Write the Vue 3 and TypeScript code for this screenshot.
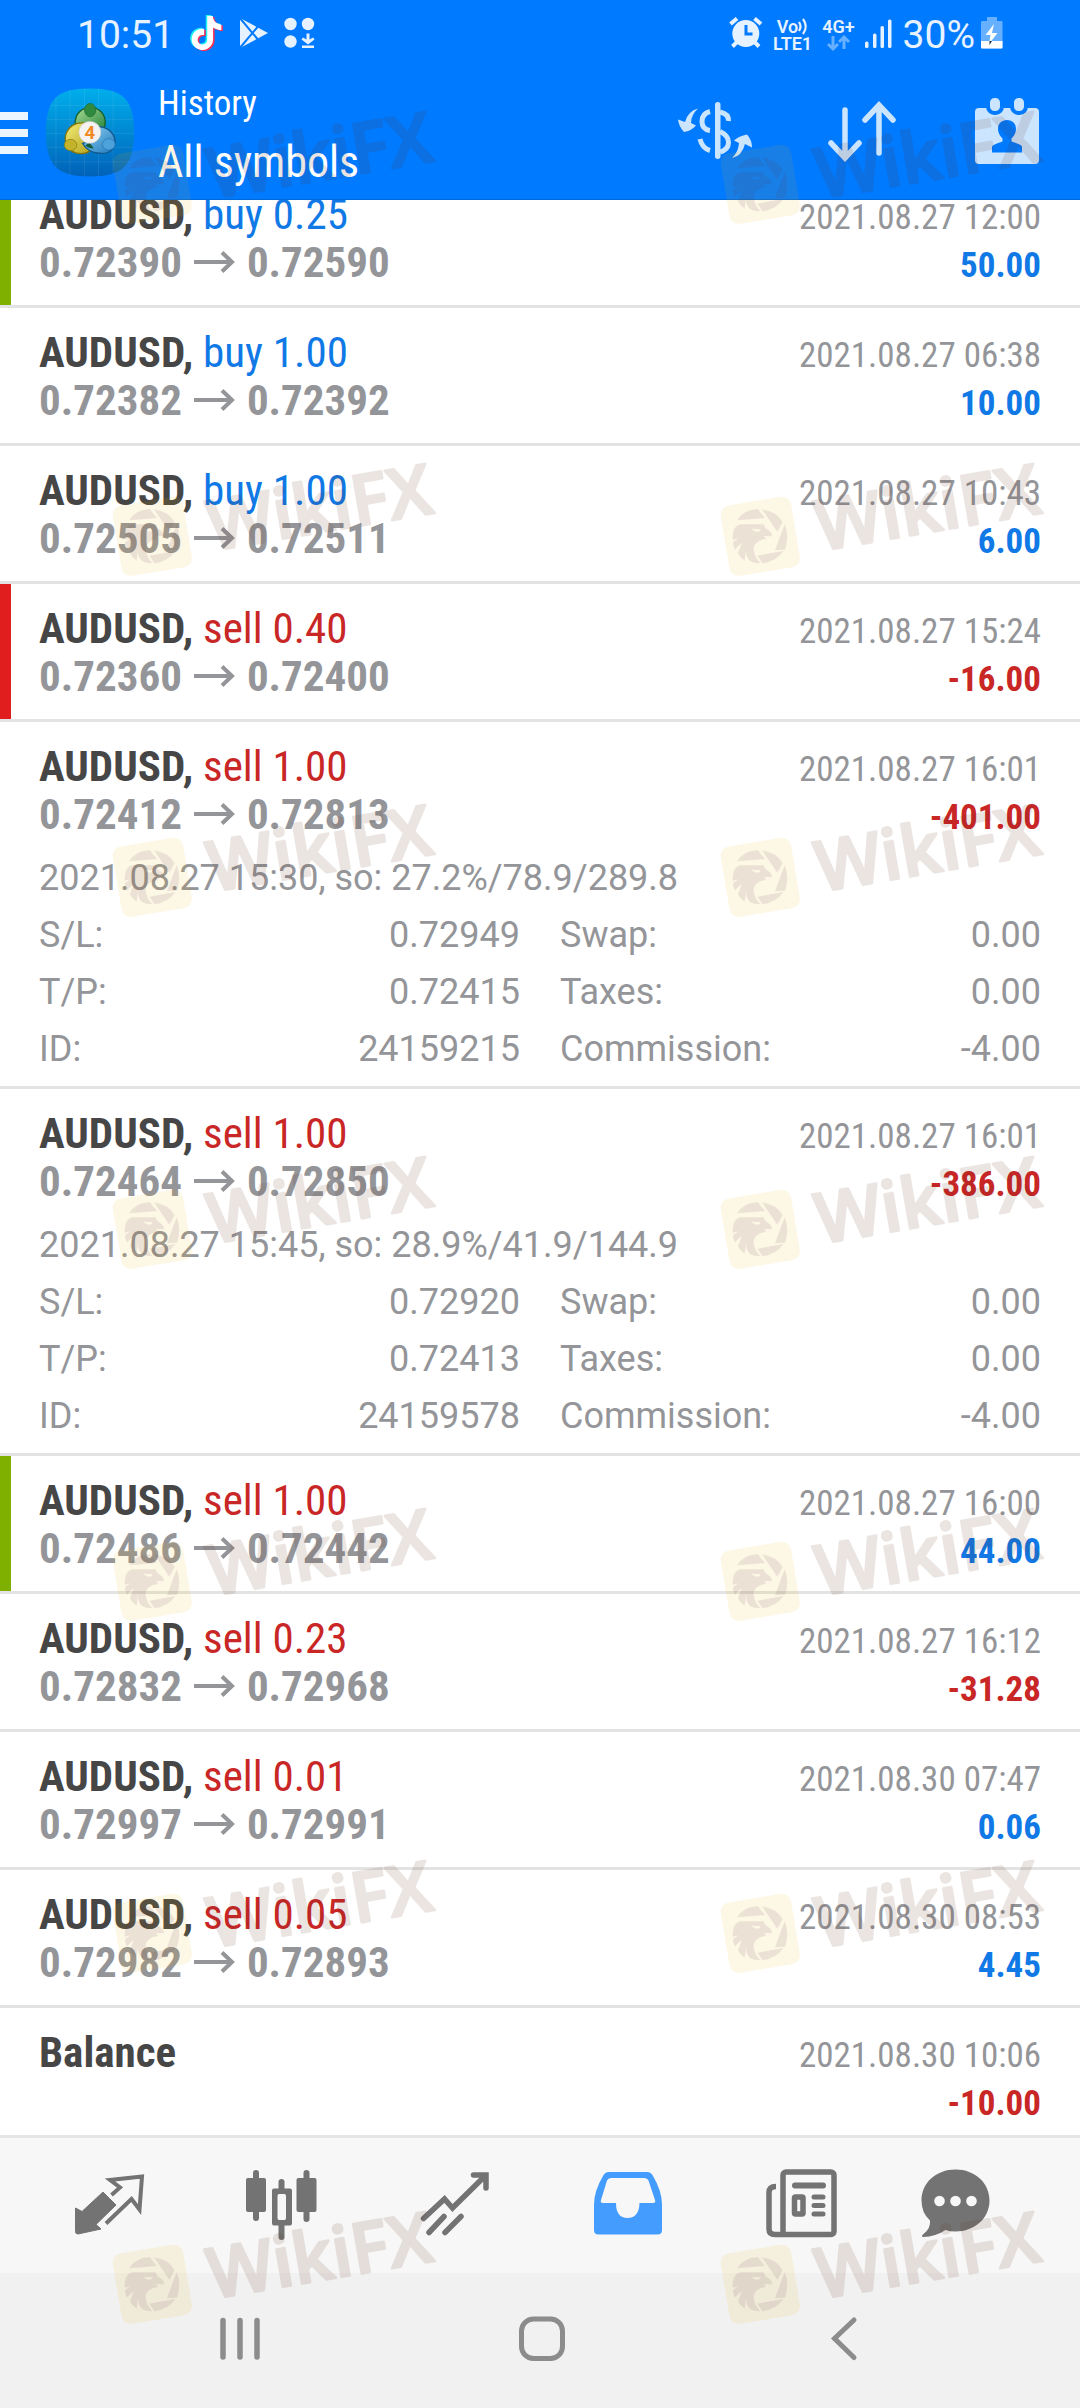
<script setup lang="ts">
import { onMounted, ref } from 'vue'

type Side = 'buy' | 'sell'

interface Detail {
  note: string
  fields: [string, string][]
}

interface Deal {
  title: string
  side?: Side
  volume?: string
  from?: string
  to?: string
  time: string
  profit: string
  mark?: 'take' | 'stop'
  detail?: Detail
}

const deals: Deal[] = [
  { title: 'AUDUSD', side: 'buy', volume: '0.25', from: '0.72390', to: '0.72590', time: '2021.08.27 12:00', profit: '50.00', mark: 'take' },
  { title: 'AUDUSD', side: 'buy', volume: '1.00', from: '0.72382', to: '0.72392', time: '2021.08.27 06:38', profit: '10.00' },
  { title: 'AUDUSD', side: 'buy', volume: '1.00', from: '0.72505', to: '0.72511', time: '2021.08.27 10:43', profit: '6.00' },
  { title: 'AUDUSD', side: 'sell', volume: '0.40', from: '0.72360', to: '0.72400', time: '2021.08.27 15:24', profit: '-16.00', mark: 'stop' },
  {
    title: 'AUDUSD', side: 'sell', volume: '1.00', from: '0.72412', to: '0.72813', time: '2021.08.27 16:01', profit: '-401.00',
    detail: {
      note: '2021.08.27 15:30, so: 27.2%/78.9/289.8',
      fields: [['S/L:', '0.72949'], ['Swap:', '0.00'], ['T/P:', '0.72415'], ['Taxes:', '0.00'], ['ID:', '24159215'], ['Commission:', '-4.00']],
    },
  },
  {
    title: 'AUDUSD', side: 'sell', volume: '1.00', from: '0.72464', to: '0.72850', time: '2021.08.27 16:01', profit: '-386.00',
    detail: {
      note: '2021.08.27 15:45, so: 28.9%/41.9/144.9',
      fields: [['S/L:', '0.72920'], ['Swap:', '0.00'], ['T/P:', '0.72413'], ['Taxes:', '0.00'], ['ID:', '24159578'], ['Commission:', '-4.00']],
    },
  },
  { title: 'AUDUSD', side: 'sell', volume: '1.00', from: '0.72486', to: '0.72442', time: '2021.08.27 16:00', profit: '44.00', mark: 'take' },
  { title: 'AUDUSD', side: 'sell', volume: '0.23', from: '0.72832', to: '0.72968', time: '2021.08.27 16:12', profit: '-31.28' },
  { title: 'AUDUSD', side: 'sell', volume: '0.01', from: '0.72997', to: '0.72991', time: '2021.08.30 07:47', profit: '0.06' },
  { title: 'AUDUSD', side: 'sell', volume: '0.05', from: '0.72982', to: '0.72893', time: '2021.08.30 08:53', profit: '4.45' },
  { title: 'Balance', time: '2021.08.30 10:06', profit: '-10.00' },
]

const watermarkRows = [127, 479, 820, 1172, 1524, 1876, 2227]

const list = ref<HTMLElement | null>(null)

// The list opens scrolled a little, with its first deal partly under the header.
onMounted(() => {
  if (list.value) list.value.scrollTop = 30
})
</script>

<template>
  <div class="screen">
    <header class="top">
      <div class="status">
        <div class="status-left">
          <span class="clock">10:51</span>
          <svg class="ic-tiktok" width="34" height="40" viewBox="0 0 34 40" aria-hidden="true">
            <defs>
              <path id="note" d="M12.525.02c1.31-.02 2.61-.01 3.91-.02.08 1.53.63 3.09 1.75 4.17 1.12 1.11 2.7 1.62 4.24 1.79v4.03c-1.44-.05-2.89-.35-4.2-.97-.57-.26-1.1-.59-1.62-.93-.01 2.92.01 5.84-.02 8.75-.08 1.4-.54 2.79-1.35 3.94-1.31 1.92-3.58 3.17-5.91 3.21-1.43.08-2.86-.31-4.08-1.03-2.02-1.19-3.44-3.37-3.65-5.71-.02-.5-.03-1-.01-1.49.18-1.9 1.12-3.72 2.58-4.96 1.66-1.44 3.98-2.13 6.15-1.72.02 1.48-.04 2.96-.04 4.44-.99-.32-2.15-.23-3.02.37-.63.41-1.11 1.04-1.36 1.75-.21.51-.15 1.07-.14 1.61.24 1.64 1.82 3.02 3.5 2.87 1.12-.01 2.19-.66 2.77-1.61.19-.33.4-.67.41-1.06.1-1.79.06-3.57.07-5.36.01-4.03-.01-8.05.02-12.07z" />
            </defs>
            <use href="#note" fill="#25f4ee" transform="translate(-2 0) scale(1.42)" />
            <use href="#note" fill="#fe2c55" transform="translate(1 2) scale(1.42)" />
            <use href="#note" fill="#fff" transform="translate(-.5 1) scale(1.42)" />
          </svg>
          <svg width="28" height="40" viewBox="0 0 28 40" aria-hidden="true">
            <path d="M0 3 28 18 0 33Z" fill="#e6f2ff" />
            <path d="M-1 2 20 27M-1 34 20 9" stroke="#007aff" stroke-width="2" />
          </svg>
          <svg width="30" height="40" viewBox="0 0 30 40" fill="#e6f2ff" aria-hidden="true">
            <circle cx="6.500" cy="9" r="6.200" />
            <circle cx="24" cy="9" r="6.200" />
            <circle cx="6.500" cy="26.500" r="6.200" />
            <path d="M22.500 18.500h3v6l3.500-2 1.500 2-6.500 5-6.500-5 1.500-2 3.500 2zM18 30.500h12v2.500H18z" />
          </svg>
        </div>
        <div class="status-right">
          <svg width="34" height="40" viewBox="0 0 34 40" aria-hidden="true">
            <g fill="none" stroke="#e6f2ff" stroke-width="4">
              <path d="M1.500 9 8 3.500M32 9l-6.500-5.500M8 27l-4.500 4.500M25.500 27l4.500 4.500" />
            </g>
            <circle cx="16.800" cy="18.500" r="13.500" fill="#e6f2ff" />
            <path d="M17 10v9h6.500" fill="none" stroke="#007aff" stroke-width="3" />
          </svg>
          <div class="net">
            <span>Vo<svg width="10" height="17" viewBox="0 0 10 17" fill="none" stroke="#e6f2ff" stroke-width="2.200" aria-hidden="true"><path d="M1 4q3 4.500 0 9M5 1q5.500 7.500 0 15" /></svg></span>
            <span>LTE1</span>
          </div>
          <div class="net">
            <span>4G+</span>
            <svg width="24" height="17" viewBox="0 0 24 17" fill="none" stroke="#66b0ff" stroke-width="3" aria-hidden="true">
              <path d="M7 1v12M2 9l5 5 5-5M18 14V2M13 7l5-5 5 5" />
            </svg>
          </div>
          <svg width="28" height="40" viewBox="0 0 28 40" fill="#e6f2ff" aria-hidden="true">
            <rect x="0" y="26.500" width="3.500" height="6.500" rx="1.500" />
            <rect x="8" y="18.500" width="3.500" height="14.500" rx="1.500" />
            <rect x="15.500" y="11" width="3.500" height="22" rx="1.500" />
            <rect x="23" y="4.500" width="3.500" height="28.500" rx="1.500" />
          </svg>
          <span class="battery">30%</span>
          <svg width="22" height="40" viewBox="0 0 22 40" aria-hidden="true">
            <path d="M6 2h10v4h4.500q1 0 1 1v26.500H0V7q0-1 1-1h5z" fill="#66b0ff" />
            <path d="M0 26h21.500v6q0 1.500-1.500 1.500H1.500Q0 33.500 0 32z" fill="#fff" />
            <path d="m13 9-8.500 11h5L8 29l8.500-11h-5.500z" fill="#fff" />
            <path d="M8.500 26h2.500l-2.500 4z" fill="#12304f" />
          </svg>
        </div>
      </div>

      <div class="bar">
        <button class="menu" type="button" aria-label="Menu"><i></i><i></i><i></i></button>
        <svg class="logo" width="88" height="89" viewBox="48 25 265 265" aria-hidden="true">
          <defs>
            <linearGradient id="sky" x1="0" y1="0" x2="0" y2="1">
              <stop offset="0" stop-color="#00aeec" />
              <stop offset="1" stop-color="#0062b8" />
            </linearGradient>
            <linearGradient id="gr" x1="0" y1="0" x2="1" y2="1"><stop offset="0" stop-color="#a8dd94" /><stop offset="1" stop-color="#23803a" /></linearGradient>
            <linearGradient id="ye" x1="0" y1="0" x2="1" y2="1"><stop offset="0" stop-color="#f3ee7c" /><stop offset="1" stop-color="#b3a015" /></linearGradient>
            <linearGradient id="bl" x1="0" y1="0" x2="1" y2="1"><stop offset="0" stop-color="#8fd3f2" /><stop offset="1" stop-color="#1f78bd" /></linearGradient>
          </defs>
          <path d="M180 25C280 25 313 57 313 157S280 290 180 290 48 257 48 157 80 25 180 25Z" fill="url(#sky)" />
          <path d="M78 50v215M120 28v260M164 25v265M206 25v265M250 30v255M62 76h238M50 118h262M48 160h265M50 202h262M60 246h242" stroke="#fff" stroke-opacity=".13" stroke-width="2" />
          <path d="M136 132C134 100 158 82 182 82s48 20 44 52q-4 16-14 22l-62-20Z" fill="url(#gr)" stroke="#185f2c" stroke-width="4" />
          <path d="M190 205q-20 22-52 14c-26-8-36-36-30-56 8-24 30-38 58-34Z" fill="url(#ye)" stroke="#857508" stroke-width="4" />
          <path d="M208 140c28 2 48 22 48 46-3 28-24 36-48 34-24-2-40-12-50-30l36-10Z" fill="url(#bl)" stroke="#12588f" stroke-width="4" />
          <path d="m166 196 14-8 12 18q-16 0-26-10Z" fill="#145c3c" />
          <ellipse cx="181" cy="90" rx="17" ry="20" fill="#2f8a3f" stroke="#1d6b2e" stroke-width="2" />
          <ellipse cx="122" cy="195" rx="19" ry="17" fill="#c2b32a" stroke="#8a7a0c" stroke-width="2" />
          <ellipse cx="237" cy="193" rx="19" ry="17" fill="#4ea2dc" stroke="#2273b5" stroke-width="2" />
          <circle cx="180" cy="157" r="33" fill="#f4f3f1" stroke="#ccc" stroke-width="2" />
          <text x="180" y="177" class="four">4</text>
        </svg>
        <h1 class="titles"><small>History</small><span>All symbols</span></h1>
        <div class="actions">
          <button type="button" aria-label="Symbols">
            <svg width="74" height="68" viewBox="0 0 74 68" aria-hidden="true">
              <g fill="#cce5ff">
                <path d="M20 9.500Q13 16 13 24l5 2.500q-5 5.500-12 6.500Q1 28 0 20.500l7 2.500Q10 12 20 9.500Z" />
                <path d="M54 59q6.500-6 7-15l-5-2.500Q61 37 69 35.500q5 5.500 5 13L67 45Q64 57 54 59Z" />
                <rect x="37" y="3" width="5.500" height="57" rx="2.700" />
              </g>
              <g fill="none" stroke="#cce5ff" stroke-width="5">
                <path d="M32 12.500q-8 2-8 10t8 9M22 40q2 9 10 11.500M42 13q9 2 8.500 9M42 32.500q8.500 4 8.500 11T42 53" />
              </g>
            </svg>
          </button>
          <button type="button" aria-label="Sort">
            <svg width="74" height="68" viewBox="0 0 74 68" fill="none" stroke="#cce5ff" stroke-width="5.500" stroke-linecap="round" aria-hidden="true">
              <path d="M19 11v48M5 44l14 15 14-15M53 54V6M39 21 53 6l14 15" />
            </svg>
          </button>
          <button type="button" aria-label="Period">
            <svg width="74" height="68" viewBox="0 0 74 68" aria-hidden="true">
              <rect x="1" y="9" width="64" height="56" rx="4" fill="#cce5ff" />
              <g fill="#cce5ff" stroke="#007aff" stroke-width="4">
                <rect x="14" y="-3" width="14" height="17" rx="6.500" />
                <rect x="38" y="-3" width="14" height="17" rx="6.500" />
              </g>
              <path d="M33 21c5.500 0 9 3.500 9 9 0 4-2 7-4.500 9.500v3q9.500 3 10.500 5v6H18v-6q1-2 10.500-5v-3C26 37 24 34 24 30c0-5.500 3.500-9 9-9Z" fill="#007aff" />
            </svg>
          </button>
        </div>
      </div>
    </header>

    <ul ref="list" class="deals">
      <li v-for="(deal, i) in deals" :key="i" class="deal" :class="deal.mark">
        <div class="line">
          <div class="name"><b>{{ deal.title }}{{ deal.side ? ', ' : '' }}</b><span v-if="deal.side" :class="deal.side">{{ deal.side }} {{ deal.volume }}</span></div>
          <time class="time">{{ deal.time }}</time>
        </div>
        <div class="line">
          <div class="prices">
            <template v-if="deal.from">
              <span>{{ deal.from }}</span>
              <svg width="41" height="22" viewBox="0 0 41 22" fill="none" stroke="#949599" stroke-width="4" role="img" aria-label="to">
                <path d="M0 11h38M28 1.500 38 11 28 20.500" />
              </svg>
              <span>{{ deal.to }}</span>
            </template>
            <template v-else>&nbsp;</template>
          </div>
          <b class="profit" :class="deal.profit.startsWith('-') ? 'sell' : 'buy'">{{ deal.profit }}</b>
        </div>
        <div v-if="deal.detail" class="detail">
          <p>{{ deal.detail.note }}</p>
          <dl>
            <div v-for="[label, value] in deal.detail.fields" :key="label">
              <dt>{{ label }}</dt>
              <dd>{{ value }}</dd>
            </div>
          </dl>
        </div>
      </li>
    </ul>

    <nav class="tabs">
      <button type="button" aria-label="Quotes">
        <svg width="72" height="72" viewBox="0 0 72 72" aria-hidden="true">
          <path d="M2.500 38 9 41.500 30 22l13 13-20 19.500 5 4.500-23 5q-2.500 0-2.500-2.500z" fill="#737373" stroke="#737373" stroke-linejoin="round" />
          <path d="M38.500 25 47 17.500 37 10l32-3.500-2.500 33-8-10.500L33 53.500" fill="none" stroke="#737373" stroke-width="4" />
        </svg>
      </button>
      <button type="button" aria-label="Charts">
        <svg width="72" height="72" viewBox="0 0 72 72" fill="#737373" aria-hidden="true">
          <rect x="7" y="0" width="6" height="51" rx="3" /><rect x="0" y="8" width="20" height="34" rx="2" />
          <rect x="57.500" y="0" width="6" height="52" rx="3" /><rect x="50.500" y="8" width="20" height="34" rx="2" />
          <rect x="32.500" y="9" width="6" height="14" rx="3" /><rect x="32.500" y="52" width="6" height="18" rx="3" />
          <path fill-rule="evenodd" d="M28 18.500h16q2 0 2 2v33q0 2-2 2H28q-2 0-2-2v-33q0-2 2-2Zm5 5.500q-1.500 0-1.500 2v22q0 2 1.500 2h5.500q1.500 0 1.500-2V26q0-2-1.500-2Z" />
        </svg>
      </button>
      <button type="button" aria-label="Trade">
        <svg width="72" height="72" viewBox="0 0 72 72" fill="none" stroke="#737373" stroke-width="5.500" stroke-linecap="round" aria-hidden="true">
          <path d="M4.500 48.500 25.500 29l8 9L66 6M54.500 5h12.500v13M10 62.500l15-16M26 62.500l16-16" />
        </svg>
      </button>
      <button type="button" aria-label="History" aria-current="page">
        <svg width="72" height="72" viewBox="0 0 72 72" fill="#449cff" aria-hidden="true">
          <path fill-rule="evenodd" d="M17 2h38q4 0 6 4 9 15 9 29v25q0 4.500-4.500 4.500h-59Q2 64.500 2 60V35Q2 21 11 6q2-4 6-4Zm2 6q-3 0-4 2.500L9 30q-1 3 2 3h13q0 15 11.500 15T47.500 33H61q3 0 2-3L56.500 10.500q-1-2.500-4-2.500Z" />
        </svg>
      </button>
      <button type="button" aria-label="News">
        <svg width="72" height="72" viewBox="0 0 72 72" fill="none" stroke="#737373" aria-hidden="true">
          <rect x="18" y="2" width="51" height="62.500" rx="3" stroke-width="5.500" />
          <path d="M11 16.500q-7 0-7 6V59q0 5.500 6 5.500h10" stroke-width="5.500" />
          <path d="M30 15.500h28" stroke-width="6" stroke-linecap="round" />
          <rect x="29.500" y="27" width="8.500" height="17" rx="1" stroke-width="5.500" />
          <path d="M49 27h9M49 35.500h9M49 44h9" stroke-width="5" stroke-linecap="round" />
        </svg>
      </button>
      <button type="button" aria-label="Messages">
        <svg width="110" height="72" viewBox="0 0 110 72" aria-hidden="true">
          <path d="M36.500-.500C56-.500 70.500 13 70.500 30.500S56 61.500 36.500 61.500q-6 0-10-1.500Q17 66.500 4 67q-2-1 0-2.500 8-6 7-14Q2.500 43 2.500 30.500C2.500 13 17-.500 36.500-.500Z" fill="#737373" />
          <g fill="#f7f7f7"><circle cx="20.500" cy="31" r="5.300" /><circle cx="36.500" cy="31" r="5.300" /><circle cx="52.500" cy="31" r="5.300" /></g>
        </svg>
      </button>
    </nav>

    <nav class="system">
      <button type="button" aria-label="Recent apps">
        <svg width="46" height="46" viewBox="0 0 46 46" stroke="#8c8c8c" stroke-width="5.500" stroke-linecap="round" aria-hidden="true"><path d="M6 4.500v36.500M23 4.500v36.500M40 4.500v36.500" /></svg>
      </button>
      <button type="button" aria-label="Home">
        <svg width="46" height="46" viewBox="0 0 46 46" fill="none" stroke="#8c8c8c" stroke-width="5" aria-hidden="true"><rect x="2.500" y="3" width="41" height="39.500" rx="12" /></svg>
      </button>
      <button type="button" aria-label="Back">
        <svg width="46" height="46" viewBox="0 0 46 46" fill="none" stroke="#8c8c8c" stroke-width="5" stroke-linecap="round" aria-hidden="true"><path d="M33 4 13.500 22.500 33 41.500" /></svg>
      </button>
    </nav>

    <div class="marks" aria-hidden="true">
      <div v-for="top in watermarkRows" :key="top" class="mark-row" :style="{ top: top + 'px' }">
        <svg v-for="n in 2" :key="n" width="340" height="110" viewBox="0 0 1020 330">
          <rect x="44" y="65" width="214" height="214" rx="28" transform="rotate(-9.500 151 172)" fill="#ebaf05" fill-opacity=".1" />
          <g fill="#612f4e" fill-rule="evenodd" opacity=".1">
            <path d="M82 124Q100 92 143 90l22 27ZM156 91q44 7 62 38l-16 29ZM224 136q15 36 1 76l-30 2ZM142 230l78-14q-20 30-62 37Z" />
            <path d="M72 150q5-9 18-14h70q6 6 6 12 20 9 20 24l-24-1 6 9q-34 4-37 28 0 24 20 45-24 0-33-9-12-14-10-35l-4 36Q90 236 84 222l12-30q-16 12-21 20-6-12-6-22l16-12-17 4q0-20 4-32ZM124 149l28 2q-2 8-10 7-10-1-18-9Z" />
          </g>
          <text x="330" y="216" class="wiki" transform="rotate(-9.700 330 216)">WikiFX</text>
        </svg>
      </div>
    </div>
  </div>
</template>

<style>
body {
  margin: 0;
  background: #fff;
}
</style>

<style scoped>
.screen {
  position: relative;
  display: flex;
  flex-direction: column;
  height: 100vh;
  overflow: hidden;
  background: #fff;
  color: #464646;
  font-family: 'Roboto Condensed', Roboto, sans-serif;
}
svg {
  display: block;
  flex: none;
  overflow: visible;
}
button {
  display: flex;
  align-items: center;
  justify-content: center;
  padding: 0;
  border: 0;
  background: none;
}

.top {
  flex: none;
  background: #007aff;
  border-bottom: 1px solid #0068d8;
  color: #fff;
}
.status {
  display: flex;
  align-items: center;
  justify-content: space-between;
  box-sizing: border-box;
  height: 66px;
  padding: 3px 77px 0 77px;
  color: #e6f2ff;
  font-family: Roboto, sans-serif;
  font-size: 39px;
}
.status-left {
  display: flex;
  align-items: center;
  gap: 16px;
}
.status-right {
  display: flex;
  align-items: center;
  gap: 10px;
}
.net {
  display: flex;
  flex-direction: column;
  align-items: center;
  font-size: 18px;
  font-weight: 600;
  line-height: 17px;
}
.net span {
  display: flex;
}
.battery {
  margin-right: -4px;
}

.bar {
  display: flex;
  align-items: center;
  height: 133px;
  padding-right: 32px;
}
.menu {
  flex-direction: column;
  gap: 9px;
  width: 28px;
}
.menu i {
  width: 100%;
  height: 8px;
  background: #ebf5ff;
}
.logo {
  margin-left: 18px;
}
.four {
  fill: #f08a24;
  font: bold 56px Roboto, sans-serif;
  text-anchor: middle;
}
.titles {
  display: flex;
  flex-direction: column;
  flex: 1;
  margin: 0 0 0 24px;
  font-size: 44px;
  font-weight: 400;
  line-height: 58px;
}
.titles small {
  font-size: 35px;
}
.actions {
  display: flex;
  gap: 74px;
}

.deals {
  flex: 1 1 0;
  min-height: 0;
  margin: 0;
  padding: 0;
  overflow-y: auto;
  scrollbar-width: none;
  list-style: none;
}
.deal {
  padding: 20px 39px 19px 39px;
  border-bottom: 3px solid #e3e3e3;
  font-size: 43px;
  line-height: 48px;
}
.take {
  box-shadow: inset 11px 0 #7fb000;
}
.stop {
  box-shadow: inset 11px 0 #e01e1e;
}
.line {
  display: flex;
  align-items: baseline;
  justify-content: space-between;
  height: 48px;
}
.name {
  white-space: pre;
}
.buy {
  color: #1079e6;
}
.sell {
  color: #c92626;
}
.time {
  color: #949599;
  font-size: 35px;
}
.prices {
  display: flex;
  align-items: center;
  gap: 12px;
  color: #949599;
  font-weight: 700;
}
.profit {
  font-size: 35px;
}
.detail {
  margin-bottom: -11px;
  padding-top: 12px;
  color: #949599;
  font-family: Roboto, sans-serif;
  font-size: 36px;
  line-height: 57px;
}
.detail p,
.detail dl,
.detail dd {
  margin: 0;
}
.detail dl {
  display: grid;
  grid-template-columns: 1fr 1fr;
  column-gap: 40px;
}
.detail dl div {
  display: flex;
  justify-content: space-between;
}

.tabs {
  display: grid;
  grid-template-columns: repeat(6, 1fr);
  flex: none;
  height: 135px;
  padding: 0 20px 0 22px;
  border-top: 3px solid #e4e5e4;
  background: #f7f7f7;
}
.system {
  display: grid;
  grid-template-columns: repeat(3, 1fr);
  flex: none;
  height: 135px;
  padding: 0 85px 0 89px;
  background: #f1f1f1;
}
.system svg {
  margin-bottom: 4px;
}

.marks {
  position: absolute;
  inset: 0;
  overflow: hidden;
  pointer-events: none;
}
.mark-row {
  position: absolute;
  left: 0;
  right: 0;
  display: flex;
  justify-content: space-between;
  padding: 0 30px 0 102px;
}
.wiki {
  fill: #612f1e;
  stroke: #612f1e;
  stroke-width: 8px;
  stroke-linejoin: round;
  opacity: .12;
  font: 600 210px 'Open Sans', sans-serif;
}
</style>
